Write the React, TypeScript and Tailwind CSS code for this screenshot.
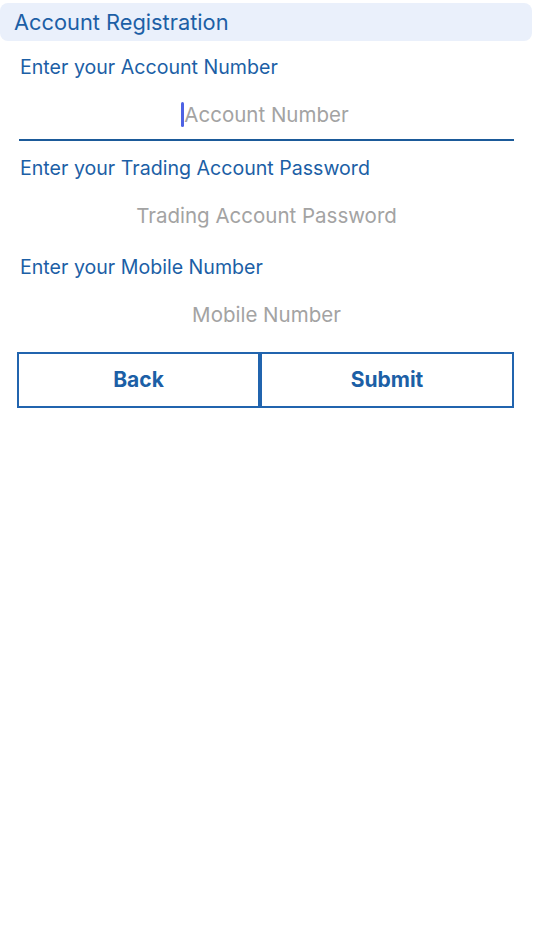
import React from 'react';

const font = { fontFamily: 'Inter, "Noto Sans", sans-serif' };

interface FieldProps {
  label: string;
  placeholder: string;
  focused?: boolean;
}

function Field({ label, placeholder, focused }: FieldProps) {
  return (
    <div className="flex flex-col">
      <div className="h-[24px] flex items-center pl-px text-[19.6px] leading-[24px] text-[#1c5fa6]">{label}</div>
      <div
        className={
          'mt-[8px] h-[49px] pt-[3px] box-content flex items-center justify-center ' +
          (focused ? 'border-b-2 border-[#1b5a99]' : '')
        }
      >
        <div className="relative flex items-center">
          {focused && <span className="absolute -left-[3px] top-[-1px] w-[3px] h-[25px] rounded-sm bg-[#4d62e4]" />}
          <span className="text-[20.5px] leading-[24px] text-[#a3a3a3]">{placeholder}</span>
        </div>
      </div>
    </div>
  );
}

export default function App() {
  return (
    <div className="w-[534px] h-[950px] bg-white" style={font}>
      <div className="pt-[3px] pr-[2px]">
        <div className="h-[38px] rounded-lg bg-[#eaf0fb] flex items-center pl-[14px]">
          <span className="text-[21.8px] leading-[26px] text-[#1c5fa6]">Account Registration</span>
        </div>
      </div>

      <div className="pl-[19px] pr-[20px] pt-[14px] flex flex-col gap-[15px]">
        <Field label="Enter your Account Number" placeholder="Account Number" focused />
        <Field label="Enter your Trading Account Password" placeholder="Trading Account Password" />
        <Field label="Enter your Mobile Number" placeholder="Mobile Number" />
      </div>

      <div className="ml-[17px] mt-[13px] grid grid-cols-[243px_254px]">
        <button className="h-[56px] border-2 border-[#2164ae] bg-white text-[21px] font-bold text-[#1c5fa6]">
          Back
        </button>
        <button className="h-[56px] border-2 border-[#2164ae] bg-white text-[21px] font-bold text-[#1c5fa6]">
          Submit
        </button>
      </div>
    </div>
  );
}
